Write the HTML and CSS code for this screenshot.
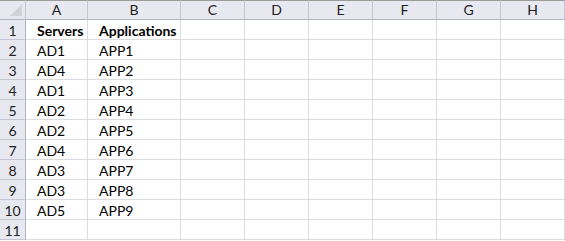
FILE: index.html
```html
<!DOCTYPE html>
<html lang="en">
<head>
    <meta charset="UTF-8">
    <title>Servers</title>
    <link rel="stylesheet" href="styles.css">
</head>
<body>
    <div id="sheet">
        <div class="corner"><span class="tri"></span></div>
        <div class="col-h">A</div>
        <div class="col-h">B</div>
        <div class="col-h">C</div>
        <div class="col-h">D</div>
        <div class="col-h">E</div>
        <div class="col-h">F</div>
        <div class="col-h">G</div>
        <div class="col-h">H</div>

        <div class="row-h">1</div>
        <div class="cell bold">Servers</div>
        <div class="cell bold">Applications</div>
        <div class="cell"></div><div class="cell"></div><div class="cell"></div><div class="cell"></div><div class="cell"></div><div class="cell"></div>

        <div class="row-h">2</div>
        <div class="cell">AD1</div>
        <div class="cell">APP1</div>
        <div class="cell"></div><div class="cell"></div><div class="cell"></div><div class="cell"></div><div class="cell"></div><div class="cell"></div>

        <div class="row-h">3</div>
        <div class="cell">AD4</div>
        <div class="cell">APP2</div>
        <div class="cell"></div><div class="cell"></div><div class="cell"></div><div class="cell"></div><div class="cell"></div><div class="cell"></div>

        <div class="row-h">4</div>
        <div class="cell">AD1</div>
        <div class="cell">APP3</div>
        <div class="cell"></div><div class="cell"></div><div class="cell"></div><div class="cell"></div><div class="cell"></div><div class="cell"></div>

        <div class="row-h">5</div>
        <div class="cell">AD2</div>
        <div class="cell">APP4</div>
        <div class="cell"></div><div class="cell"></div><div class="cell"></div><div class="cell"></div><div class="cell"></div><div class="cell"></div>

        <div class="row-h">6</div>
        <div class="cell">AD2</div>
        <div class="cell">APP5</div>
        <div class="cell"></div><div class="cell"></div><div class="cell"></div><div class="cell"></div><div class="cell"></div><div class="cell"></div>

        <div class="row-h">7</div>
        <div class="cell">AD4</div>
        <div class="cell">APP6</div>
        <div class="cell"></div><div class="cell"></div><div class="cell"></div><div class="cell"></div><div class="cell"></div><div class="cell"></div>

        <div class="row-h">8</div>
        <div class="cell">AD3</div>
        <div class="cell">APP7</div>
        <div class="cell"></div><div class="cell"></div><div class="cell"></div><div class="cell"></div><div class="cell"></div><div class="cell"></div>

        <div class="row-h">9</div>
        <div class="cell">AD3</div>
        <div class="cell">APP8</div>
        <div class="cell"></div><div class="cell"></div><div class="cell"></div><div class="cell"></div><div class="cell"></div><div class="cell"></div>

        <div class="row-h">10</div>
        <div class="cell">AD5</div>
        <div class="cell">APP9</div>
        <div class="cell"></div><div class="cell"></div><div class="cell"></div><div class="cell"></div><div class="cell"></div><div class="cell"></div>

        <div class="row-h">11</div>
        <div class="cell"></div>
        <div class="cell"></div>
        <div class="cell"></div><div class="cell"></div><div class="cell"></div><div class="cell"></div><div class="cell"></div><div class="cell"></div>
    </div>
</body>
</html>
```

FILE: styles.css
```css
body {
    margin: 0;
    background: #fff;
}
#sheet {
    display: grid;
    grid-template-columns: 26px 62px 93px repeat(6, 64px);
    grid-auto-rows: 20px;
    font: 14px/18px Lato, "Liberation Sans", sans-serif;
    color: #000;
}
#sheet > div {
    box-sizing: border-box;
    border-right: 1px solid #dadcdd;
    border-bottom: 1px solid #dadcdd;
}
#sheet > .corner,
#sheet > .col-h {
    background: #e8e8f0;
    border-top: 1px solid #9c9c9c;
    border-right: 1px solid #c5c5d3;
    border-bottom: 1px solid #b2b2c2;
}
.col-h {
    text-align: center;
    color: #222;
}
.corner {
    position: relative;
}
.tri {
    position: absolute;
    right: 3px;
    bottom: 3px;
    width: 0;
    height: 0;
    border-left: 12px solid transparent;
    border-bottom: 12px solid #d2d2d8;
}
#sheet > .row-h {
    background: #e8e8f0;
    border-right: 1px solid #b2b2c2;
    border-bottom: 1px solid #c5c5d3;
    padding-top: 2px;
    text-align: center;
    color: #222;
}
.cell {
    padding: 2px 0 0 11px;
    white-space: nowrap;
}
.bold {
    font-weight: bold;
}
```
